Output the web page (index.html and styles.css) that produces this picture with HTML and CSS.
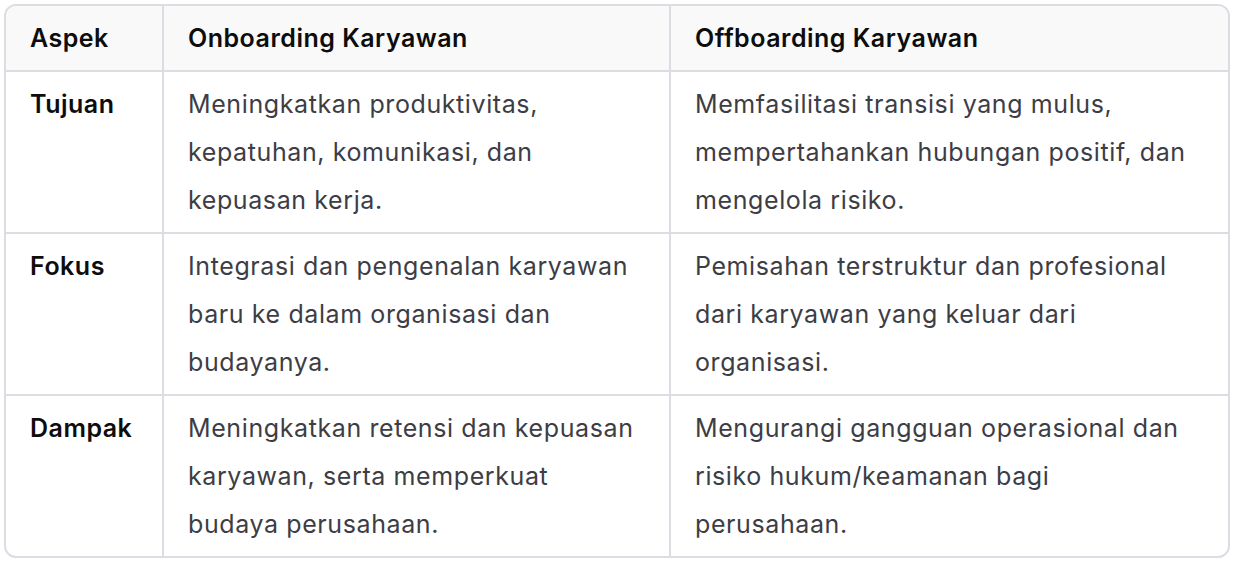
FILE: index.html
```html
<!DOCTYPE html>
<html lang="id">
<head>
<meta charset="utf-8">
<link rel="stylesheet" href="styles.css">
</head>
<body>
<div class="wrap">
<table class="tbl">
<colgroup><col class="c1"><col class="c2"><col class="c3"></colgroup>
<thead>
<tr><th>Aspek</th><th>Onboarding Karyawan</th><th>Offboarding Karyawan</th></tr>
</thead>
<tbody>
<tr><td class="key">Tujuan</td><td>Meningkatkan produktivitas, kepatuhan, komunikasi, dan kepuasan kerja.</td><td>Memfasilitasi transisi yang mulus, mempertahankan hubungan positif, dan mengelola risiko.</td></tr>
<tr><td class="key">Fokus</td><td>Integrasi dan pengenalan karyawan baru ke dalam organisasi dan budayanya.</td><td>Pemisahan terstruktur dan profesional dari karyawan yang keluar dari organisasi.</td></tr>
<tr><td class="key">Dampak</td><td>Meningkatkan retensi dan kepuasan karyawan, serta memperkuat budaya perusahaan.</td><td>Mengurangi gangguan operasional dan risiko hukum/keamanan bagi perusahaan.</td></tr>
</tbody>
</table>
</div>
</body>
</html>
```
FILE: styles.css
```css
html, body { margin: 0; padding: 0; background: #ffffff; }
body { padding: 4px 4px 0 4px; font-family: Inter, "Noto Sans", sans-serif; }
.wrap {
  width: 1226px;
  border: 2px solid #dcdce2;
  border-radius: 12px;
  overflow: hidden;
  box-sizing: border-box;
}
.tbl { border-collapse: collapse; width: 100%; table-layout: fixed; }
.c1 { width: 157px; }
.c2 { width: 507px; }
.c3 { width: auto; }
th, td {
  text-align: left;
  vertical-align: top;
  font-size: 25px;
  line-height: 48px;
  letter-spacing: 0.6px;
  padding: 8px 24px 8px 24px;
  border-right: 2px solid #dcdce2;
  border-bottom: 2px solid #dcdce2;
}
th:last-child, td:last-child { border-right: none; }
tbody tr:last-child td { border-bottom: none; }
th { background: #f9f9f9; color: #0d0d0d; font-weight: 600; letter-spacing: 0.5px; }
td { color: #3d3d45; font-weight: 400; }
td.key { color: #0d0d0d; font-weight: 600; letter-spacing: 0.5px; }
```
